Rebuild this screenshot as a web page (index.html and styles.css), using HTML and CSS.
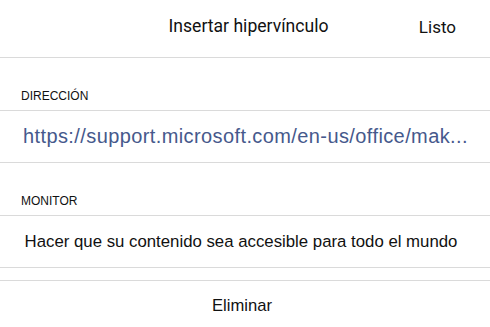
FILE: index.html
```html
<!DOCTYPE html>
<html lang="es">
<head>
    <meta charset="UTF-8">
    <title>Insertar hipervínculo</title>
    <link rel="stylesheet" href="styles.css">
</head>
<body>
    <header class="topbar">
        <h1>Insertar hipervínculo</h1>
        <a class="done" href="#">Listo</a>
    </header>
    <main>
        <div class="label">DIRECCIÓN</div>
        <div class="row url">https://support.microsoft.com/en-us/office/mak...</div>

        <div class="label">MONITOR</div>
        <div class="row display">Hacer que su contenido sea accesible para todo el mundo</div>

        <div class="spacer"></div>
        <div class="row remove">Eliminar</div>
    </main>
</body>
</html>
```

FILE: styles.css
```css
body, h1, a {
    margin: 0;
    padding: 0;
}

body {
    width: 490px;
    height: 327px;
    background-color: #fff;
    font-family: "Liberation Sans", Arial, sans-serif;
    color: #111;
    overflow: hidden;
}

.topbar {
    height: 57px;
    border-bottom: 1px solid #dadada;
    display: flex;
    align-items: center;
    justify-content: center;
    position: relative;
    font-family: Roboto, sans-serif;
}

.topbar h1 {
    font-size: 17.6px;
    font-weight: normal;
    margin: -5px 0 0 7px;
}

.done {
    position: absolute;
    right: 34px;
    top: 17px;
    font-size: 17px;
    color: #111;
    text-decoration: none;
}

.label {
    height: 53px;
    box-sizing: border-box;
    padding: 31px 21px 0;
    font-size: 12px;
    border-bottom: 1px solid #dadada;
}

.row {
    height: 52px;
    box-sizing: border-box;
    border-bottom: 1px solid #dadada;
    display: flex;
    align-items: center;
}

.url {
    padding-left: 23px;
    font-size: 20px;
    letter-spacing: 0.4px;
    color: #46598c;
}

.display {
    justify-content: center;
    padding-right: 8px;
    font-size: 16.8px;
}

.spacer {
    height: 13px;
    box-sizing: border-box;
    border-bottom: 1px solid #dadada;
}

.remove {
    justify-content: center;
    border-bottom: none;
    height: 46px;
    padding: 4px 6px 0 0;
    font-size: 16.6px;
}
```
